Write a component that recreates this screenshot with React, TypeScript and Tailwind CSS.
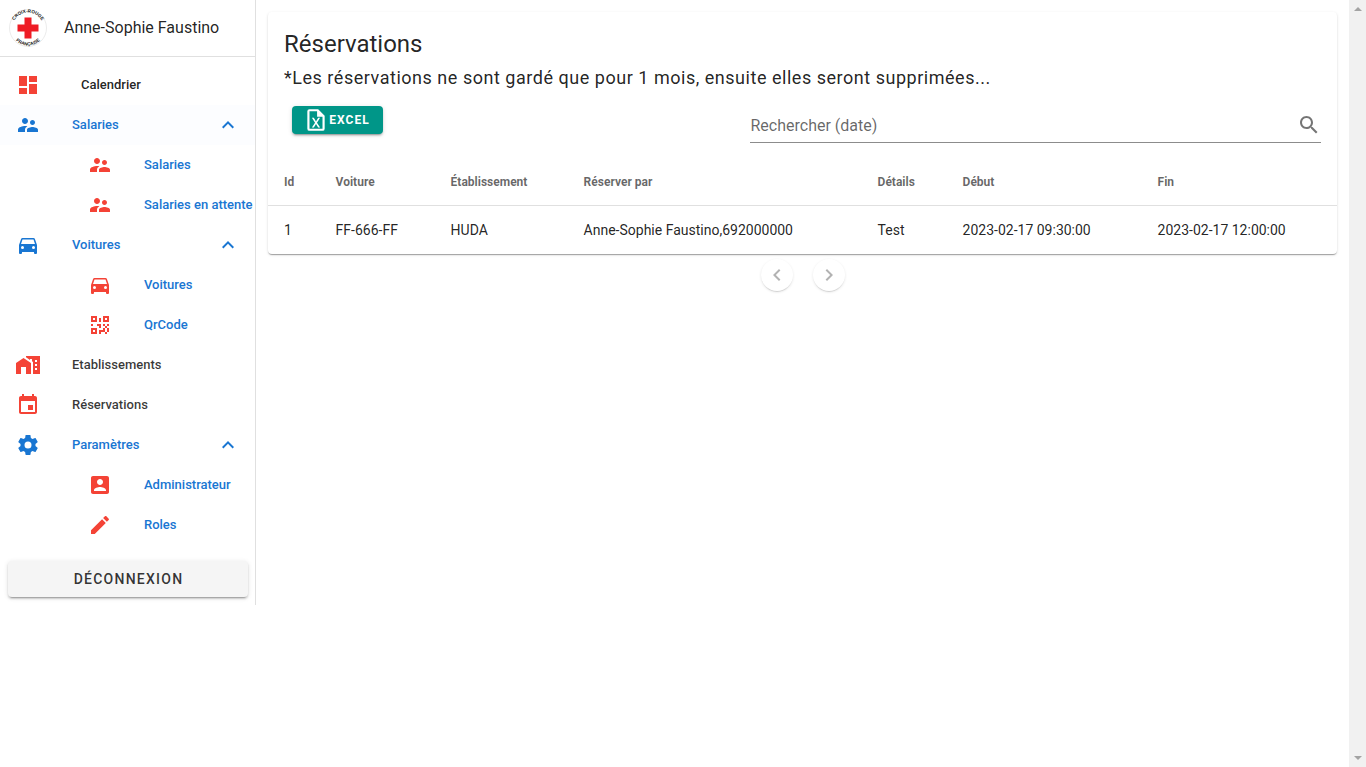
import React from 'react';

const paths = {
  dashboard: 'M13,3V9H21V3M13,21H21V11H13M3,21H11V15H3M3,13H11V3H3V13Z',
  people: 'M16.5 12c1.38 0 2.49-1.12 2.49-2.5S17.88 7 16.5 7C15.12 7 14 8.12 14 9.5s1.12 2.5 2.5 2.5zM9 11c1.66 0 2.99-1.34 2.99-3S10.66 5 9 5C7.34 5 6 6.34 6 8s1.34 3 3 3zm7.5 3c-1.83 0-5.5.92-5.5 2.75V19h11v-2.25c0-1.83-3.67-2.75-5.5-2.75zM9 13c-2.33 0-7 1.17-7 3.5V19h7v-2.25c0-.85.33-2.34 2.37-3.47C10.5 13.1 9.66 13 9 13z',
  car: 'M5,11L6.5,6.5H17.5L19,11M17.5,16A1.5,1.5 0 0,1 16,14.5A1.5,1.5 0 0,1 17.5,13A1.5,1.5 0 0,1 19,14.5A1.5,1.5 0 0,1 17.5,16M6.5,16A1.5,1.5 0 0,1 5,14.5A1.5,1.5 0 0,1 6.5,13A1.5,1.5 0 0,1 8,14.5A1.5,1.5 0 0,1 6.5,16M18.92,6C18.72,5.42 18.16,5 17.5,5H6.5C5.84,5 5.28,5.42 5.08,6L3,12V20A1,1 0 0,0 4,21H5A1,1 0 0,0 6,20V19H18V20A1,1 0 0,0 19,21H20A1,1 0 0,0 21,20V12L18.92,6Z',
  qr: 'M3,11H5V13H3V11M11,5H13V9H11V5M9,11H13V15H11V13H9V11M15,11H17V13H19V11H21V13H19V15H21V19H19V21H17V19H13V21H11V17H15V15H17V13H15V11M19,19V15H17V19H19M15,3H21V9H15V3M17,5V7H19V5H17M3,3H9V9H3V3M5,5V7H7V5H5M3,15H9V21H3V15M5,17V19H7V17H5Z',
  home: 'M0,21V10L7.5,5L15,10V21H10V14H5V21H0M24,3V21H17V8.93L16,8.27V6H14V6.93L10,4.27V3H24M21,15H19V17H21V15M21,11H19V13H21V11M21,7H19V9H21V7Z',
  event: 'M17 12h-5v5h5v-5zM16 1v2H8V1H6v2H5c-1.11 0-1.99.9-1.99 2L3 19c0 1.1.89 2 2 2h14c1.1 0 2-.9 2-2V5c0-1.1-.9-2-2-2h-1V1h-2zm3 18H5V8h14v11z',
  settings: 'M12,15.5A3.5,3.5 0 0,1 8.5,12A3.5,3.5 0 0,1 12,8.5A3.5,3.5 0 0,1 15.5,12A3.5,3.5 0 0,1 12,15.5M19.43,12.97C19.47,12.65 19.5,12.33 19.5,12C19.5,11.67 19.47,11.34 19.43,11L21.54,9.37C21.73,9.22 21.78,8.95 21.66,8.73L19.66,5.27C19.54,5.05 19.27,4.96 19.05,5.05L16.56,6.05C16.04,5.66 15.5,5.32 14.87,5.07L14.5,2.42C14.46,2.18 14.25,2 14,2H10C9.75,2 9.54,2.18 9.5,2.42L9.13,5.07C8.5,5.32 7.96,5.66 7.44,6.05L4.95,5.05C4.73,4.96 4.46,5.05 4.34,5.27L2.34,8.73C2.21,8.95 2.27,9.22 2.46,9.37L4.57,11C4.53,11.34 4.5,11.67 4.5,12C4.5,12.33 4.53,12.65 4.57,12.97L2.46,14.63C2.27,14.78 2.21,15.05 2.34,15.27L4.34,18.73C4.46,18.95 4.73,19.03 4.95,18.95L7.44,17.94C7.96,18.34 8.5,18.68 9.13,18.93L9.5,21.58C9.54,21.82 9.75,22 10,22H14C14.25,22 14.46,21.82 14.5,21.58L14.87,18.93C15.5,18.67 16.04,18.34 16.56,17.94L19.05,18.95C19.27,19.03 19.54,18.95 19.66,18.73L21.66,15.27C21.78,15.05 21.73,14.78 21.54,14.63L19.43,12.97Z',
  account: 'M3 5v14c0 1.1.89 2 2 2h14c1.1 0 2-.9 2-2V5c0-1.1-.9-2-2-2H5c-1.11 0-2 .9-2 2zm12 4c0 1.66-1.34 3-3 3s-3-1.34-3-3 1.34-3 3-3 3 1.34 3 3zm-9 8c0-2 4-3.1 6-3.1s6 1.1 6 3.1v1H6v-1z',
  edit: 'M20.71,7.04C21.1,6.65 21.1,6 20.71,5.63L18.37,3.29C18,2.9 17.35,2.9 16.96,3.29L15.12,5.12L18.87,8.87M3,17.25V21H6.75L17.81,9.93L14.06,6.18L3,17.25Z',
  less: 'M7.41,15.41L12,10.83L16.59,15.41L18,14L12,8L6,14L7.41,15.41Z',
  search: 'M15.5 14h-.79l-.28-.27C15.41 12.59 16 11.11 16 9.5 16 5.91 13.09 3 9.5 3S3 5.91 3 9.5 5.91 16 9.5 16c1.61 0 3.09-.59 4.23-1.57l.27.28v.79l5 4.99L20.49 19l-4.99-5zm-6 0C7.01 14 5 11.99 5 9.5S7.01 5 9.5 5 14 7.01 14 9.5 11.99 14 9.5 14z',
  prev: 'M15.41,16.58L10.83,12L15.41,7.41L14,6L8,12L14,18L15.41,16.58Z',
  next: 'M8.59,16.58L13.17,12L8.59,7.41L10,6L16,12L10,18L8.59,16.58Z',
  excel: 'M14,2H6A2,2 0 0,0 4,4V20A2,2 0 0,0 6,22H18A2,2 0 0,0 20,20V8L14,2M18,20H6V4H13V9H18V20M12.9,14.5L15.8,19H14L12,15.6L10,19H8.2L11.1,14.5L8.2,10H10L12,13.4L14,10H15.8L12.9,14.5Z',
};

const Icon = ({ d, className }: { d: string; className: string }) => (
  <svg viewBox="0 0 24 24" fill="currentColor" className={className}>
    <path d={d} />
  </svg>
);

const Logo = () => (
  <svg viewBox="0 0 38 38" className="w-[38px] h-[38px]">
    <circle cx="19" cy="19" r="18.5" fill="#fff" stroke="#ddd" strokeWidth="0.6" />
    <path d="M15.5 8.5h7v7h7v7h-7v7h-7v-7h-7v-7h7z" fill="#ee1c25" />
    <defs>
      <path id="logoTop" d="M3.5 19a15.5 15.5 0 0 1 31 0" />
      <path id="logoBottom" d="M1.5 19a17.5 17.5 0 0 0 35 0" />
    </defs>
    <text fontSize="4.6" fontWeight="700" fill="#111" fontFamily="'Liberation Sans', sans-serif">
      <textPath href="#logoTop" startOffset="50%" textAnchor="middle">CROIX-ROUGE</textPath>
    </text>
    <text fontSize="4.6" fontWeight="700" fill="#111" fontFamily="'Liberation Sans', sans-serif">
      <textPath href="#logoBottom" startOffset="50%" textAnchor="middle">FRANÇAISE</textPath>
    </text>
  </svg>
);

const NavRow = ({ icon, label, kind, tint }: { icon: string; label: string; kind: 'top' | 'parent' | 'plain' | 'sub'; tint?: boolean }) => {
  if (kind === 'sub') {
    return (
      <div className="h-10 flex items-center">
        <div className="w-[144px] pl-[88px] shrink-0">
          <Icon d={icon} className="w-6 h-6 text-[#f44336]" />
        </div>
        <span className="text-[13px] font-medium text-[#1976d2] whitespace-nowrap">{label}</span>
      </div>
    );
  }
  return (
    <div className={`h-10 flex items-center ${tint ? 'bg-[#fcfdff]' : ''}`}>
      <div className="w-[72px] pl-4 shrink-0">
        <Icon d={icon} className={`w-6 h-6 ${kind === 'parent' ? 'text-[#1976d2]' : 'text-[#f44336]'}`} />
      </div>
      <span className={`flex-1 text-[13px] font-medium ${kind === 'parent' ? 'text-[#1976d2]' : kind === 'plain' ? 'text-[rgba(0,0,0,0.78)]' : 'text-[rgba(0,0,0,0.87)]'} ${kind === 'top' ? 'pl-[9px]' : ''}`}>
        {label}
      </span>
      {kind === 'parent' && <Icon d={paths.less} className="w-6 h-6 mr-[15px] text-[#1976d2]" />}
    </div>
  );
};

const columns = [
  { label: 'Id', value: '1', width: 'w-[51.6px]' },
  { label: 'Voiture', value: 'FF-666-FF', width: 'w-[115px]' },
  { label: 'Établissement', value: 'HUDA', width: 'w-[133px]' },
  { label: 'Réserver par', value: 'Anne-Sophie Faustino,692000000', width: 'w-[294px]' },
  { label: 'Détails', value: 'Test', width: 'w-[85px]' },
  { label: 'Début', value: '2023-02-17 09:30:00', width: 'w-[195px]' },
  { label: 'Fin', value: '2023-02-17 12:00:00', width: 'flex-1' },
];

export default function App() {
  return (
    <div className="w-[1366px] h-[767px] flex overflow-hidden bg-white text-[rgba(0,0,0,0.87)] font-['Roboto',sans-serif]">
      {/* sidebar */}
      <aside className="w-[256px] h-[605px] shrink-0 border-r border-[#e0e0e0] flex flex-col">
        <div className="h-[57px] shrink-0 border-b border-[#e0e0e0] flex items-center pl-[9px]">
          <Logo />
          <span className="ml-[17px] text-base whitespace-nowrap">Anne-Sophie Faustino</span>
        </div>
        <nav className="pt-2">
          <NavRow icon={paths.dashboard} label="Calendrier" kind="top" />
          <NavRow icon={paths.people} label="Salaries" kind="parent" tint />
          <NavRow icon={paths.people} label="Salaries" kind="sub" />
          <NavRow icon={paths.people} label="Salaries en attente" kind="sub" />
          <NavRow icon={paths.car} label="Voitures" kind="parent" />
          <NavRow icon={paths.car} label="Voitures" kind="sub" />
          <NavRow icon={paths.qr} label="QrCode" kind="sub" />
          <NavRow icon={paths.home} label="Etablissements" kind="plain" />
          <NavRow icon={paths.event} label="Réservations" kind="plain" />
          <NavRow icon={paths.settings} label="Paramètres" kind="parent" />
          <NavRow icon={paths.account} label="Administrateur" kind="sub" />
          <NavRow icon={paths.edit} label="Roles" kind="sub" />
        </nav>
        <div className="pl-2 pr-[7px] pt-4">
          <button className="w-full h-9 pl-px rounded bg-[#f5f5f5] text-sm font-medium tracking-[1.25px] text-[rgba(0,0,0,0.8)] shadow-[0_3px_1px_-2px_rgba(0,0,0,0.2),0_2px_2px_0_rgba(0,0,0,0.14),0_1px_5px_0_rgba(0,0,0,0.12)]">
            DÉCONNEXION
          </button>
        </div>
      </aside>

      {/* content */}
      <main className="flex-1 min-w-0 pt-3 px-3">
        <section className="rounded bg-white shadow-[0_2px_1px_-1px_rgba(0,0,0,0.2),0_1px_1px_0_rgba(0,0,0,0.14),0_1px_3px_0_rgba(0,0,0,0.12)]">
          <div className="px-4 pt-4">
            <h1 className="text-2xl leading-8">Réservations</h1>
            <p className="text-lg leading-[26px] mt-[5px] tracking-[0.525px]">
              *Les réservations ne sont gardé que pour 1 mois, ensuite elles seront supprimées...
            </p>
          </div>
          <div className="flex items-start justify-between pl-6 pr-4 mt-3">
            <button className="mt-[3px] w-[91px] h-7 pr-[2px] rounded bg-[#009688] text-white text-xs font-bold tracking-[1px] flex items-center justify-center shadow-[0_3px_1px_-2px_rgba(0,0,0,0.2),0_2px_2px_0_rgba(0,0,0,0.14),0_1px_5px_0_rgba(0,0,0,0.12)]">
              <Icon d={paths.excel} className="w-[26px] h-[26px]" />
              EXCEL
            </button>
            <div className="w-[571px] h-[40px] pt-[6px] pl-[0.5px] border-b border-[#8c8c8c] flex items-center justify-between">
              <span className="text-base text-[rgba(0,0,0,0.6)]">Rechercher (date)</span>
              <Icon d={paths.search} className="w-6 h-6 -mt-[2px] text-[rgba(0,0,0,0.54)]" />
            </div>
          </div>
          <div className="mt-[15px] h-[48px] flex items-center pl-4 border-b border-[#e0e0e0]">
            {columns.map(c => (
              <div key={c.label} className={`${c.width} text-xs font-bold text-[rgba(0,0,0,0.6)]`}>{c.label}</div>
            ))}
          </div>
          <div className="h-[48px] flex items-center pl-4 text-sm">
            {columns.map(c => (
              <div key={c.label} className={`${c.width} whitespace-nowrap`}>{c.value}</div>
            ))}
          </div>
        </section>
        <div className="flex justify-center gap-5 mt-[5px]">
          <button className="w-8 h-8 rounded-full bg-white flex items-center justify-center shadow-[0_2px_1px_-1px_rgba(0,0,0,0.12),0_1px_3px_0_rgba(0,0,0,0.1)]">
            <Icon d={paths.prev} className="w-6 h-6 text-[rgba(0,0,0,0.3)]" />
          </button>
          <button className="w-8 h-8 rounded-full bg-white flex items-center justify-center shadow-[0_2px_1px_-1px_rgba(0,0,0,0.12),0_1px_3px_0_rgba(0,0,0,0.1)]">
            <Icon d={paths.next} className="w-6 h-6 text-[rgba(0,0,0,0.3)]" />
          </button>
        </div>
      </main>

      {/* page scrollbar with nothing to scroll */}
      <div className="w-[17px] shrink-0 bg-[#f1f1f1] flex flex-col items-center justify-between py-[7px]">
        <div className="w-0 h-0 border-x-[4px] border-x-transparent border-b-[4px] border-b-[#a3a3a3]" />
        <div className="w-0 h-0 border-x-[4px] border-x-transparent border-t-[4px] border-t-[#a3a3a3]" />
      </div>
    </div>
  );
}
